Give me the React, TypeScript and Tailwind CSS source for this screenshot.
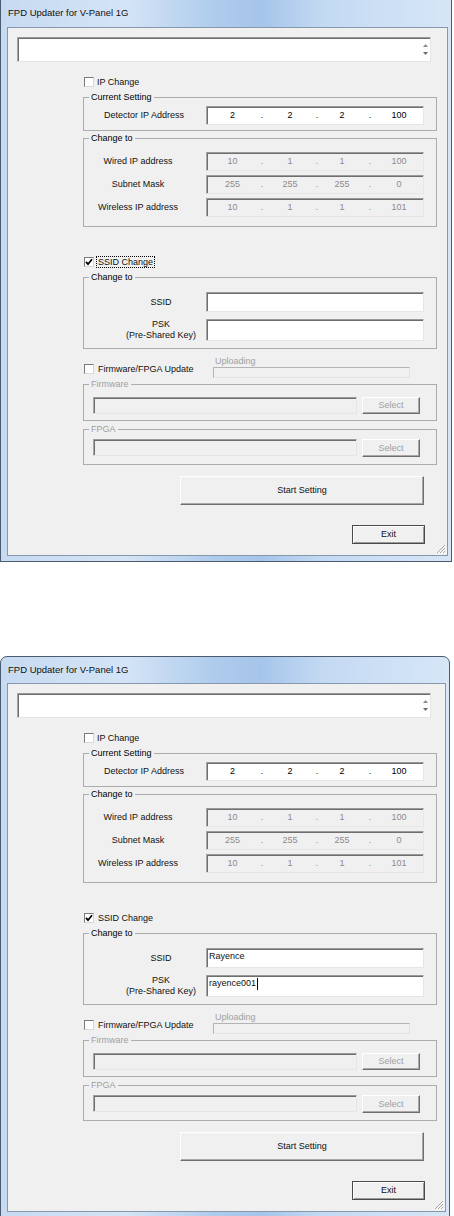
import React from "react";

const sunken =
  "border border-t-[#9a9a9a] border-l-[#a8a8a8] border-r-[#e6e6e6] border-b-[#e6e6e6] shadow-[inset_1px_1px_0_#6e6e6e]";
const raised =
  "border border-t-white border-l-white border-r-[#6e6e6e] border-b-[#6e6e6e] shadow-[inset_-1px_-1px_0_#a8a8a8] bg-[#f0f0f0]";

function Check({ checked }: { checked?: boolean }) {
  return (
    <span className="flex h-[10px] w-[10px] shrink-0 items-center justify-center border border-t-[#7a7a7a] border-l-[#7a7a7a] border-r-[#d8d8d8] border-b-[#d8d8d8] bg-white">
      {checked && (
        <svg viewBox="0 0 8 8" className="h-[8px] w-[8px]">
          <path d="M1 3.8 L3 6.2 L7 1.2" stroke="#000" strokeWidth="1.8" fill="none" />
        </svg>
      )}
    </span>
  );
}

function IpBox({ values, disabled }: { values: string[]; disabled?: boolean }) {
  const fieldW = ["w-[51px]", "w-[48px]", "w-[44px]", "w-[46px]"];
  const dotW = ["w-[8px]", "w-[6px]", "w-[12px]"];
  return (
    <div
      className={`flex h-[19px] w-[218px] items-center ${sunken} ${
        disabled ? "bg-[#f0f0f0] text-[#8c8c8c]" : "bg-white text-black"
      }`}
    >
      {values.map((v, i) => (
        <React.Fragment key={i}>
          <span className={`${fieldW[i]} text-center`}>{v}</span>
          {i < 3 && <span className={`${dotW[i]} text-center`}>.</span>}
        </React.Fragment>
      ))}
    </div>
  );
}

function Group({
  title,
  disabled,
  className,
  children,
}: {
  title: string;
  disabled?: boolean;
  className?: string;
  children: React.ReactNode;
}) {
  return (
    <fieldset className={`border border-[#acacac] ${className ?? ""}`}>
      <legend className={`ml-[5px] px-[2px] leading-[11px] ${disabled ? "text-[#a0a0a0]" : "text-black"}`}>
        {title}
      </legend>
      {children}
    </fieldset>
  );
}

function Win({
  filled,
  focusSsid,
  widthClass,
  cropped,
}: {
  filled?: boolean;
  focusSsid?: boolean;
  widthClass: string;
  cropped?: boolean;
}) {
  return (
    <div
      className={`flex h-[562px] ${widthClass} shrink-0 flex-col border border-[#4b5a6c] bg-[linear-gradient(90deg,#c6daf1_0%,#d4e4f6_28%,#aecbec_48%,#a6c5ea_58%,#c4daf3_72%,#d6e6f7_100%)] ${
        cropped ? "border-t-0" : "rounded-t-[7px]"
      }`}
    >
      <div
        className={`flex ${cropped ? "h-[27px]" : "h-[26px]"} shrink-0 items-center pl-[7px] text-[9.5px] text-[#111]`}
      >
        FPD Updater for V-Panel 1G
      </div>
      <div className="relative ml-[6px] mr-[3px] flex h-[529px] shrink-0 flex-col border border-[#8798ad] bg-[#f0f0f0] text-[9px] leading-[11px] text-[#111]">
        {/* message box with spin */}
        <div className={`ml-[9px] mt-[9px] flex h-[25px] w-[414px] justify-end bg-white ${sunken}`}>
          <div className="flex w-[9px] flex-col items-center justify-center gap-[5px]">
            <svg viewBox="0 0 5 3" className="h-[3px] w-[5px]">
              <path d="M0 3 L2.5 0 L5 3 Z" fill="#8a8a8a" />
            </svg>
            <svg viewBox="0 0 5 3" className="h-[3px] w-[5px]">
              <path d="M0 0 L2.5 3 L5 0 Z" fill="#6a6a6a" />
            </svg>
          </div>
        </div>

        <div className="ml-[75px] flex w-[354px] flex-col">
          {/* IP Change */}
          <div className="mt-[14px] flex h-[12px] items-center pl-[1px]">
            <Check />
            <span className="ml-[3px]">IP Change</span>
          </div>

          <Group title="Current Setting" className="mt-[4px] pb-[5px]">
            <div className="mt-[3px] flex items-center">
              <span className="w-[122px] pr-[2px] text-center">Detector IP Address</span>
              <IpBox values={["2", "2", "2", "100"]} />
            </div>
          </Group>

          <Group title="Change to" className="mt-[2px] pb-[9px]">
            <div className="mt-[8px] flex flex-col gap-[4px]">
              {[
                ["Wired IP address", ["10", "1", "1", "100"]],
                ["Subnet Mask", ["255", "255", "255", "0"]],
                ["Wireless IP address", ["10", "1", "1", "101"]],
              ].map(([label, vals]) => (
                <div key={label as string} className="flex items-center">
                  <span className="w-[122px] pr-[14px] text-center">{label as string}</span>
                  <IpBox values={vals as string[]} disabled />
                </div>
              ))}
            </div>
          </Group>

          {/* SSID Change */}
          <div className="mt-[29px] flex h-[12px] items-center pl-[1px]">
            <Check checked />
            <span
              className={`ml-[2px] px-[1px] leading-[10px] ${
                focusSsid ? "border border-dotted border-black" : "border border-transparent"
              }`}
            >
              SSID Change
            </span>
          </div>

          <Group title="Change to" className="mt-[4px] pb-[7px]">
            <div className="mt-[9px] flex items-center">
              <span className="w-[122px] pl-[32px] text-center">SSID</span>
              <div className={`flex h-[20px] w-[218px] items-start bg-white pl-[2px] pt-[2px] ${sunken}`}>
                {filled ? "Rayence" : ""}
              </div>
            </div>
            <div className="mt-[7px] flex items-center">
              <span className="w-[122px] pl-[32px] text-center">
                PSK
                <br />
                (Pre-Shared Key)
              </span>
              <div className={`flex h-[22px] w-[218px] items-start bg-white pl-[2px] pt-[2px] ${sunken}`}>
                {filled && (
                  <>
                    <span>rayence001</span>
                    <span className="ml-[1px] h-[12px] w-[1px] bg-black" />
                  </>
                )}
              </div>
            </div>
          </Group>

          {/* Firmware/FPGA update row */}
          <div className="mt-[7px] flex h-[22px]">
            <div className="mt-[7px] flex h-[12px] w-[130px] items-center pl-[1px]">
              <Check />
              <span className="ml-[4px]">Firmware/FPGA Update</span>
            </div>
            <div className="flex flex-col">
              <span className="ml-[2px] h-[11px] text-[#a0a0a0]">Uploading</span>
              <div className="h-[11px] w-[197px] border border-t-[#b4b4b4] border-l-[#b4b4b4] border-r-[#e4e4e4] border-b-[#e4e4e4] bg-[#f0f0f0]" />
            </div>
          </div>

          <Group title="Firmware" disabled className="mt-[1px] pb-[6px]">
            <div className="mt-[7px] flex items-center gap-[5px] pl-[9px]">
              <div className={`h-[17px] w-[264px] bg-[#f0f0f0] ${sunken}`} />
              <div className={`flex h-[17px] w-[58px] items-center justify-center text-[#a0a0a0] ${raised}`}>
                Select
              </div>
            </div>
          </Group>

          <Group title="FPGA" disabled className="mt-[3px] pb-[7px]">
            <div className="mt-[4px] flex items-start gap-[5px] pl-[9px]">
              <div className={`h-[17px] w-[264px] bg-[#f0f0f0] ${sunken}`} />
              <div className={`flex h-[18px] w-[58px] items-center justify-center text-[#a0a0a0] ${raised}`}>
                Select
              </div>
            </div>
          </Group>

          <div className={`ml-[97px] mt-[11px] flex h-[29px] w-[244px] items-center justify-center ${raised}`}>
            Start Setting
          </div>

          <div className="ml-[269px] mt-[20px] flex h-[19px] w-[73px] items-center justify-center border border-[#4a4a4a] bg-[#f0f0f0] shadow-[inset_1px_1px_0_white,inset_-1px_-1px_0_#9a9a9a]">
            Exit
          </div>
        </div>

        {/* size grip */}
        <svg viewBox="0 0 11 11" className="absolute bottom-[1px] right-[1px] h-[11px] w-[11px]">
          <path d="M10 2 L2 10 M10 5 L5 10 M10 8 L8 10" stroke="#a8a8a8" strokeWidth="1" />
          <path d="M11 3 L3 11 M11 6 L6 11 M11 9 L9 11" stroke="#ffffff" strokeWidth="1" />
        </svg>
      </div>
    </div>
  );
}

export default function App() {
  return (
    <div className="flex h-[1216px] w-[454px] flex-col overflow-hidden bg-white font-['Liberation_Sans',Arial,sans-serif]">
      <Win focusSsid cropped widthClass="w-[452px]" />
      <div className="mt-[94px]">
        <Win filled widthClass="w-[450px]" />
      </div>
    </div>
  );
}
